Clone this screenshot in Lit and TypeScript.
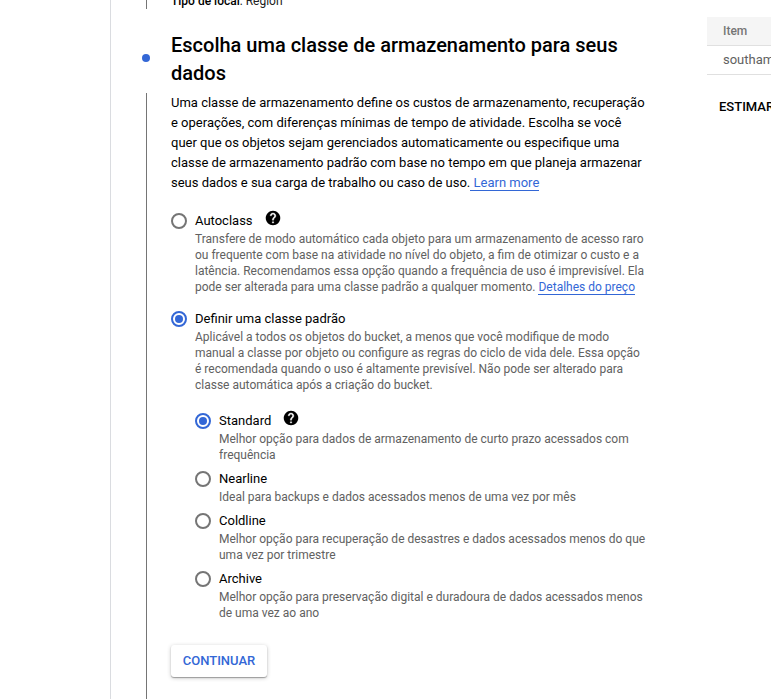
import { LitElement, html, css, nothing } from "lit";
import { customElement, property } from "lit/decorators.js";

@customElement("help-icon")
class HelpIcon extends LitElement {
  static styles = css`
    :host { display: block; width: 16px; height: 16px; }
    svg { display: block; }
  `;
  render() {
    return html`<svg width="16" height="16" viewBox="1 1 22 22" fill="#000">
      <path d="M12 2C6.48 2 2 6.48 2 12s4.480 10 10 10 10-4.480 10-10S17.520 2 12 2z" />
      <path fill="#fff" stroke="#fff" stroke-width=".4" d="M13 19h-2v-2h2v2zm2.070-7.750-.9.920C13.450 12.900 13 13.500 13 15h-2v-.5c0-1.100.45-2.100 1.170-2.830l1.240-1.260c.37-.36.59-.86.59-1.410 0-1.100-.9-2-2-2s-2 .9-2 2H8c0-2.210 1.790-4 4-4s4 1.790 4 4c0 .88-.36 1.680-.93 2.250z" />
    </svg>`;
  }
}

@customElement("radio-option")
class RadioOption extends LitElement {
  @property() label = "";
  @property() text = "";
  @property() link = "";
  @property({ type: Boolean }) checked = false;
  @property({ type: Boolean }) help = false;

  static styles = css`
    :host { display: grid; grid-template-columns: 16px auto; column-gap: 8px; }
    .radio {
      box-sizing: border-box; width: 16px; height: 16px; margin-top: 2px;
      border: 2px solid #757575; border-radius: 50%;
      display: flex; align-items: center; justify-content: center;
    }
    .radio.on { border-color: #3367d6; }
    .radio.on::after { content: ""; width: 8px; height: 8px; border-radius: 50%; background: #3367d6; }
    .head { display: flex; height: 20px; line-height: 20px; font-size: 13px; color: #000; white-space: nowrap; }
    help-icon { margin: -1px 0 0 12px; }
    .desc { grid-column: 2; font-size: 12px; line-height: 16px; color: #616161; white-space: pre; }
    .link { color: #3367d6; border-bottom: 1px solid #3367d6; }
  `;
  render() {
    return html`
      <span class="radio ${this.checked ? "on" : ""}"></span>
      <div class="head"><span>${this.label}</span>${this.help ? html`<help-icon></help-icon>` : nothing}</div>
      <div class="desc">${this.text}${this.link ? html`<a class="link">${this.link}</a>` : nothing}</div>
    `;
  }
}

@customElement("app-root")
class AppRoot extends LitElement {
  static styles = css`
    :host {
      display: flex; width: 771px; height: 699px; overflow: hidden; box-sizing: border-box;
      padding-left: 110px; background: #fff; color: #000;
      font: 13px/20px Roboto, sans-serif;
    }
    .main { display: flex; flex: none; width: 596px; border-left: 1px solid #dadce0; box-sizing: border-box; }
    .rail { width: 8px; margin: 0 21px 0 31px; display: flex; flex-direction: column; align-items: center; flex: none; }
    .line { width: 1px; background: #757575; flex: none; margin-left: 1px; }
    .before { height: 9px; }
    .after { flex: 1; }
    .dot { width: 8px; height: 8px; border-radius: 50%; background: #3367d6; margin: 45px 0 31px; flex: none; }
    .content { width: 480px; flex: none; }
    .previous { height: 31px; line-height: 16px; margin-top: -7px; font-size: 12px; color: #212121; }
    .previous b { font-weight: 500; color: #000; }
    h2 { margin: 7px 0 6px; font-size: 20px; line-height: 28px; font-weight: 500; white-space: pre; }
    p { margin: 0 0 18px; white-space: pre; }
    .link { color: #3367d6; border-bottom: 1px solid #3367d6; }
    .choices { display: flex; flex-direction: column; gap: 14px; }
    .classes { display: flex; flex-direction: column; gap: 6px; margin: 18px 0 24px 24px; }
    .button {
      display: flex; align-items: center; justify-content: center; box-sizing: border-box; width: 96px; height: 32px;
      border: 0; border-radius: 3px; background: #fff; padding: 0 0 2px;
      color: #3367d6; font: 500 13px Roboto, sans-serif;
      box-shadow: 0 1px 1px rgba(0,0,0,.3), 0 1px 4px rgba(0,0,0,.22);
    }
    .side { width: 200px; margin: 17px 0 0 1px; flex: none; }
    .cell { box-sizing: border-box; height: 29px; line-height: 28px; padding-left: 16px; color: #616161; border-bottom: 1px solid #e0e0e0; }
    .cell.th { background: #f5f5f5; font-size: 12px; font-weight: 500; color: #757575; }
    .estimate { margin: 22px 0 0 12px; font-weight: 500; white-space: nowrap; }
  `;
  render() {
    return html`
      <div class="main">
        <div class="rail">
          <span class="line before"></span><span class="dot"></span><span class="line after"></span>
        </div>
        <div class="content">
          <div class="previous"><b>Tipo de local</b>: Region</div>
          <h2>${"Escolha uma classe de armazenamento para seus\ndados"}</h2>
          <p>${"Uma classe de armazenamento define os custos de armazenamento, recuperação\ne operações, com diferenças mínimas de tempo de atividade. Escolha se você\nquer que os objetos sejam gerenciados automaticamente ou especifique uma\nclasse de armazenamento padrão com base no tempo em que planeja armazenar\nseus dados e sua carga de trabalho ou caso de uso."}<a class="link"> Learn more</a></p>
          <div class="choices">
            <radio-option label="Autoclass" help link="Detalhes do preço"
              .text=${"Transfere de modo automático cada objeto para um armazenamento de acesso raro\nou frequente com base na atividade no nível do objeto, a fim de otimizar o custo e a\nlatência. Recomendamos essa opção quando a frequência de uso é imprevisível. Ela\npode ser alterada para uma classe padrão a qualquer momento. "}></radio-option>
            <radio-option label="Definir uma classe padrão" checked
              .text=${"Aplicável a todos os objetos do bucket, a menos que você modifique de modo\nmanual a classe por objeto ou configure as regras do ciclo de vida dele. Essa opção\né recomendada quando o uso é altamente previsível. Não pode ser alterado para\nclasse automática após a criação do bucket."}></radio-option>
          </div>
          <div class="classes">
            <radio-option label="Standard" help checked
              .text=${"Melhor opção para dados de armazenamento de curto prazo acessados com\nfrequência"}></radio-option>
            <radio-option label="Nearline"
              .text=${"Ideal para backups e dados acessados menos de uma vez por mês"}></radio-option>
            <radio-option label="Coldline"
              .text=${"Melhor opção para recuperação de desastres e dados acessados menos do que\numa vez por trimestre"}></radio-option>
            <radio-option label="Archive"
              .text=${"Melhor opção para preservação digital e duradoura de dados acessados menos\nde uma vez ao ano"}></radio-option>
          </div>
          <button class="button">CONTINUAR</button>
        </div>
      </div>
      <div class="side">
        <div class="cell th">Item</div>
        <div class="cell">southamerica-east1</div>
        <div class="estimate">ESTIMAR</div>
      </div>
    `;
  }
}
